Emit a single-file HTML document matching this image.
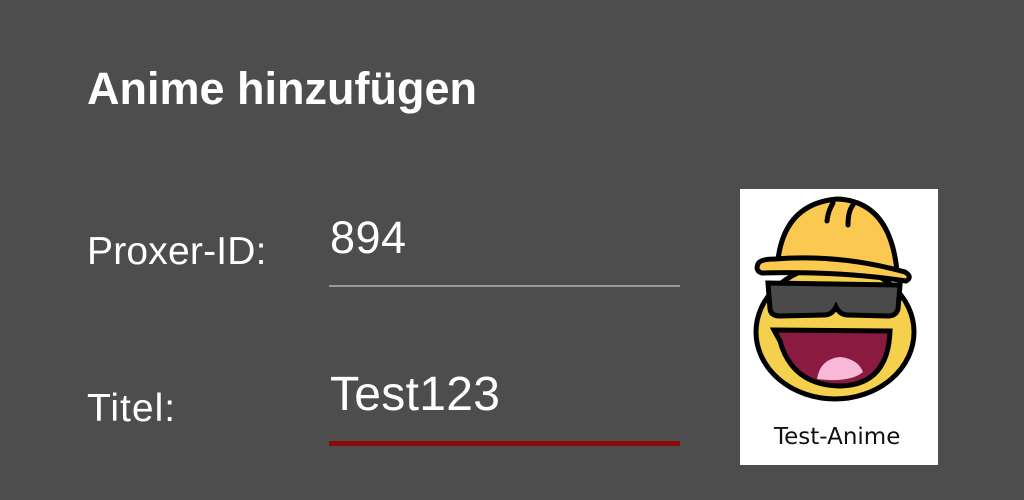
<!DOCTYPE html>
<html><head><style>
body{margin:0;width:1024px;height:500px;background:#4d4d4d;font-family:"Liberation Sans",sans-serif;color:#fff;position:relative;overflow:hidden}
.t{position:absolute;white-space:nowrap;line-height:1}
</style></head><body>
<div class="t" style="left:87px;top:66px;font-size:45px;font-weight:bold">Anime hinzufügen</div>
<div class="t" style="left:87px;top:232px;font-size:39px;letter-spacing:0.2px">Proxer-ID:</div>
<div class="t" style="left:330px;top:215px;font-size:45px;letter-spacing:0.5px">894</div>
<div style="position:absolute;left:329px;top:285px;width:351px;height:2px;background:#9a9a9a"></div>
<div class="t" style="left:87px;top:389px;font-size:39px;letter-spacing:1px">Titel:</div>
<div class="t" style="left:330px;top:371px;font-size:48px;letter-spacing:0.3px">Test123</div>
<div style="position:absolute;left:329px;top:441px;width:351px;height:5px;background:#8b0b0b"></div>
<div style="position:absolute;left:740px;top:189px;width:198px;height:276px;background:#fff">
<svg width="198" height="276" viewBox="0 0 198 276">
<ellipse cx="95" cy="143" rx="79" ry="67" fill="#f4d04c" stroke="#000" stroke-width="5"/>
<path d="M37 82 Q40 15 97 10 Q150 12 157 82 Z" fill="#fbc94f" stroke="#000" stroke-width="5"/>
<path d="M87 32 Q88 22 93 14 M108 36 Q108 22 113 16" stroke="#000" stroke-width="5" fill="none" stroke-linecap="round"/>
<path d="M18 75 Q20 70 35 70 Q100 65 165 83 Q173 88 166 92 Q100 82 22 84 Q15 82 18 75Z" fill="#fbc94f" stroke="#000" stroke-width="5"/>
<path d="M28 94 L160 96 L158 120 Q156 127 148 127 L108 126 Q100 126 96 118 Q92 126 84 126 L40 127 Q31 127 30 120Z" fill="#4a4a4a" stroke="#000" stroke-width="5"/>
<path d="M34 141 L150 142 Q148 196 100 197 Q52 196 40 152Z" fill="#8b1a40" stroke="#000" stroke-width="5"/>
<path d="M77 190 Q80 170 100 168 Q118 170 123 183 Q110 194 77 190Z" fill="#f8b8d8"/>
</svg>
<div class="t" style="left:34px;top:237px;font-size:23px;color:#111;font-family:'DejaVu Sans',sans-serif">Test-Anime</div>
</div>
</body></html>
